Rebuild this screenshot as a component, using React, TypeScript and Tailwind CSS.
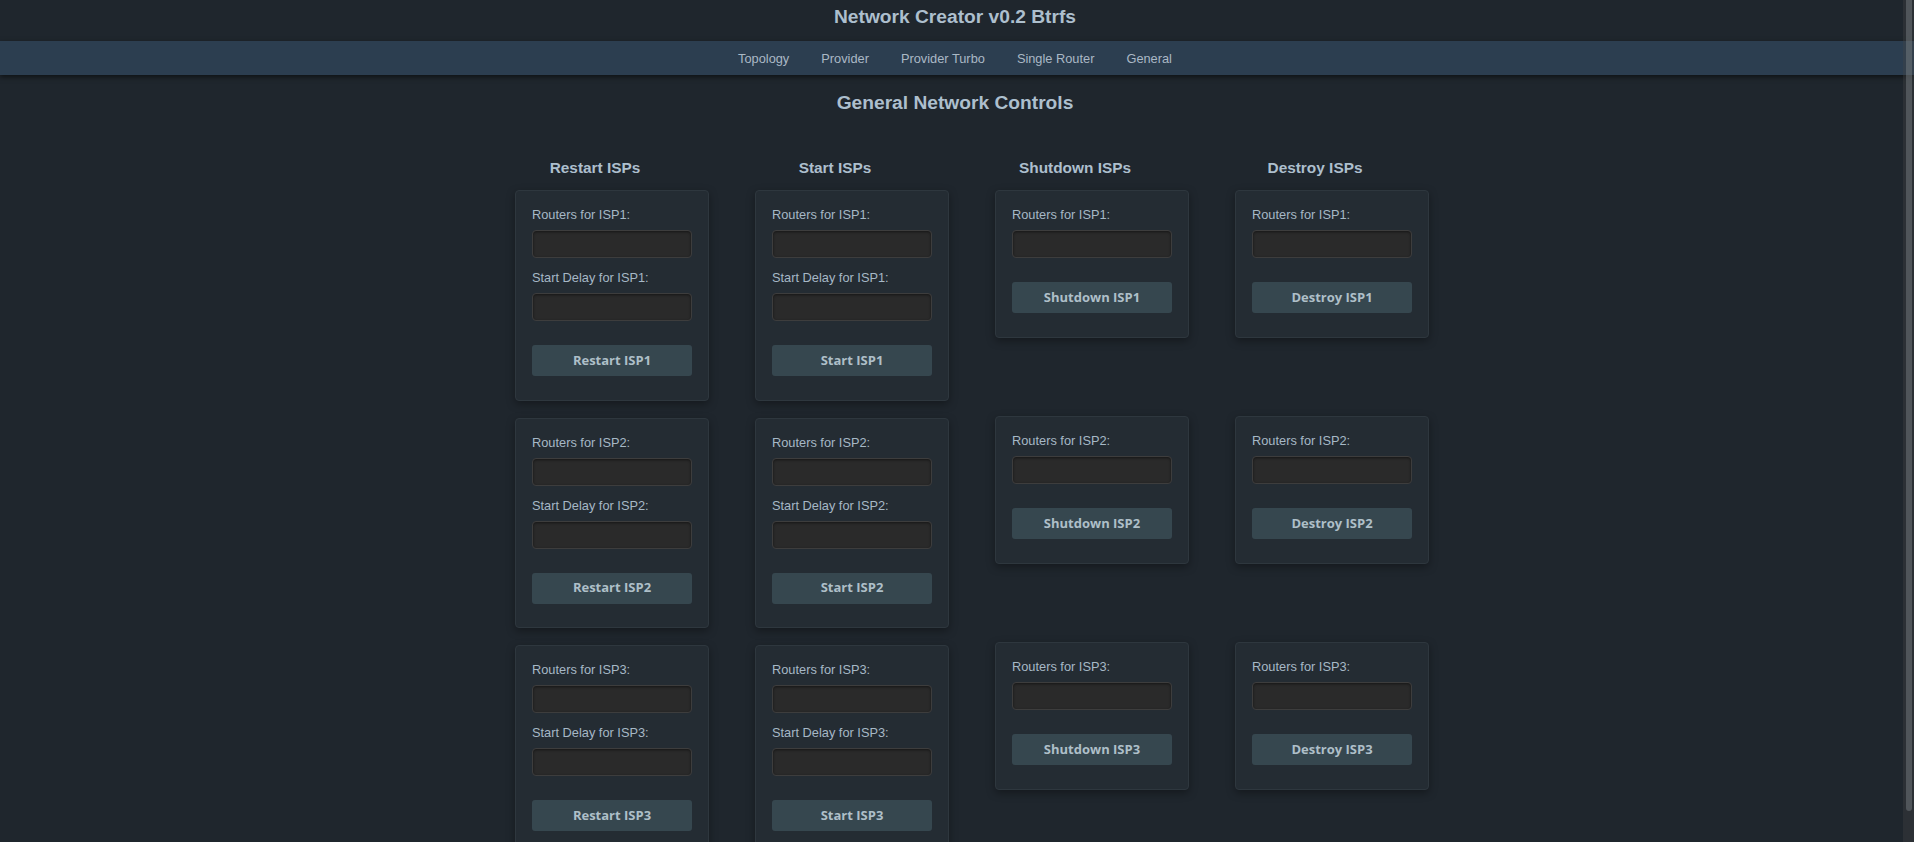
import React from "react";

type CardProps = { action: string; isp: number; withDelay: boolean };

function Card({ action, isp, withDelay }: CardProps) {
  return (
    <div className="box-content w-[160px] px-4 pt-4 pb-[23.5px] border border-[#2e373e] rounded-[4px] bg-[#242c33] shadow-[0_3px_8px_rgba(0,0,0,0.35)]">
      <label className="block text-[12.8px] leading-[15px] text-[#a6b8c6]">Routers for ISP{isp}:</label>
      <input
        type="text"
        className="mt-2 block w-full h-[28px] rounded-[4px] border border-[#3d3d3d] bg-[#2a2a2a] shadow-[inset_0_1px_3px_rgba(0,0,0,0.5)] outline-none"
      />
      {withDelay && (
        <>
          <label className="mt-3 block text-[12.8px] leading-[15px] text-[#a6b8c6]">Start Delay for ISP{isp}:</label>
          <input
            type="text"
            className="mt-2 block w-full h-[28px] rounded-[4px] border border-[#3d3d3d] bg-[#2a2a2a] shadow-[inset_0_1px_3px_rgba(0,0,0,0.5)] outline-none"
          />
        </>
      )}
      <button className="mt-6 block w-full h-[31px] rounded-[3px] bg-[#36474f] text-[13px] font-bold text-[#aebfc8] font-['Open_Sans','Noto_Sans',sans-serif]">
        {action} ISP{isp}
      </button>
    </div>
  );
}

function Column({ title, action, withDelay }: { title: string; action: string; withDelay: boolean }) {
  return (
    <div className="w-[160px] flex flex-col">
      <h3 className="text-center text-[15.4px] leading-[18px] font-bold text-[#adbfcd] whitespace-nowrap mb-[13px]">{title}</h3>
      <div className={withDelay ? "flex flex-col gap-[17px]" : "flex flex-col gap-[78.5px]"}>
        {[1, 2, 3].map((n) => (
          <Card key={n} action={action} isp={n} withDelay={withDelay} />
        ))}
      </div>
    </div>
  );
}

export default function App() {
  const navItems = ["Topology", "Provider", "Provider Turbo", "Single Router", "General"];
  return (
    <div className="relative h-screen overflow-hidden bg-[#1f262d] font-['Liberation_Sans',Arial,sans-serif]">
      <header className="pt-[6px] pb-[13px] pr-[4px] text-center">
        <h1 className="text-[19.2px] leading-[22px] font-bold text-[#adbfcd]">Network Creator v0.2 Btrfs</h1>
      </header>
      <nav className="relative z-10 h-[34px] pt-[2px] bg-[#2c3e50] shadow-[0_2px_5px_rgba(0,0,0,0.55)] flex justify-center items-center pr-[4px]">
        {navItems.map((item) => (
          <span key={item} className="px-4 text-[12.8px] text-[#aab8c5] cursor-pointer">
            {item}
          </span>
        ))}
      </nav>
      <main className="pr-[4px]">
        <h2 className="mt-[17px] text-center text-[19.2px] leading-[22px] font-bold text-[#adbfcd]">General Network Controls</h2>
        <div className="mt-[45px] flex justify-center gap-[80px]">
          <Column title="Restart ISPs" action="Restart" withDelay={true} />
          <Column title="Start ISPs" action="Start" withDelay={true} />
          <Column title="Shutdown ISPs" action="Shutdown" withDelay={false} />
          <Column title="Destroy ISPs" action="Destroy" withDelay={false} />
        </div>
      </main>
      <div className="absolute right-0 top-0 z-20 h-full w-[11px] bg-[rgba(70,70,70,0.35)]">
        <div className="ml-[3px] h-[811px] w-[6px] rounded-b-full bg-[rgba(125,130,136,0.45)]" />
      </div>
    </div>
  );
}
